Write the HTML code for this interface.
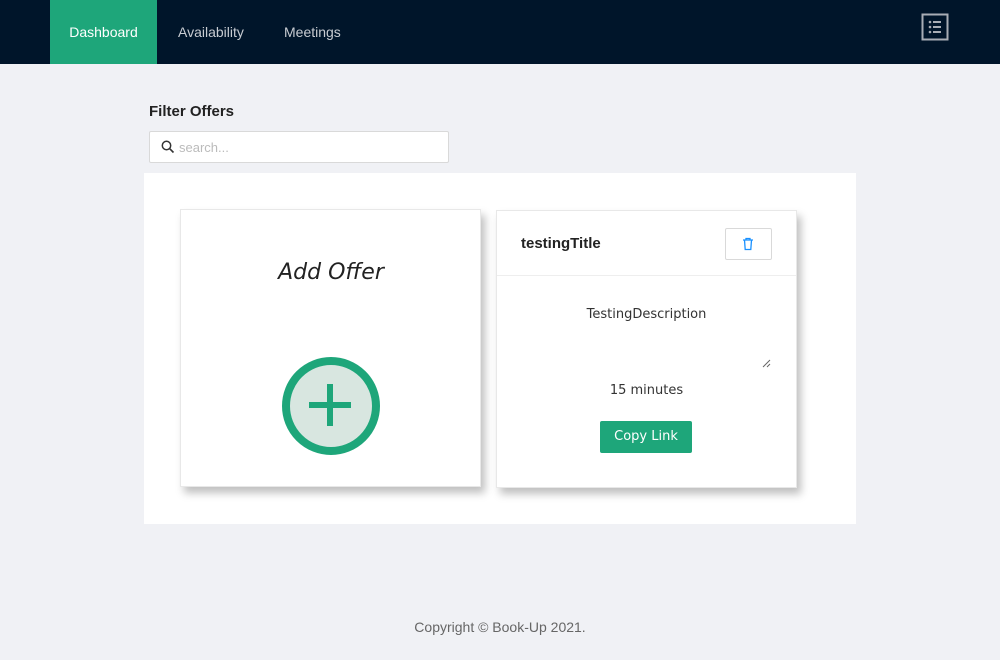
<!DOCTYPE html>
<html><head><meta charset="utf-8"><style>
*{box-sizing:border-box;margin:0;padding:0}
body{width:1000px;height:660px;background:#f0f1f5;font-family:"Liberation Sans",sans-serif;position:relative;overflow:hidden}
.nav{position:absolute;left:0;top:0;width:1000px;height:64px;background:#00152a}
.nav a{position:absolute;top:0;height:64px;line-height:64px;color:#c8ccd2;font-size:14px;text-decoration:none}
.active{background:#1ea67a;color:#fff!important;text-align:center}
.ab{position:absolute}
.card{position:absolute;background:#fff;border:1px solid #e8e8e8;box-shadow:4px 6px 8px rgba(0,0,0,.25)}
</style></head><body>
<div class="nav">
<a class="active" style="left:50px;width:107px">Dashboard</a>
<a style="left:178px">Availability</a>
<a style="left:284px">Meetings</a>
<svg class="ab" style="left:921px;top:13px" width="28" height="28" viewBox="0 0 28 28"><rect x="1.5" y="1.5" width="25" height="25" fill="none" stroke="#a8adb5" stroke-width="2"/><g fill="#a8adb5"><circle cx="9" cy="9" r="1.3"/><circle cx="9" cy="14" r="1.3"/><circle cx="9" cy="19" r="1.3"/><rect x="12" y="8" width="8" height="2"/><rect x="12" y="13" width="8" height="2"/><rect x="12" y="18" width="8" height="2"/></g></svg>
</div>
<div class="ab" style="left:149px;top:103px;font-size:15px;color:#222;font-weight:bold">Filter Offers</div>
<div class="ab" style="left:149px;top:131px;width:300px;height:32px;background:#fff;border:1px solid #d9d9d9;border-radius:2px">
<svg class="ab" style="left:11px;top:8px" width="14" height="14" viewBox="0 0 14 14"><circle cx="5.5" cy="5.5" r="4.2" fill="none" stroke="#333" stroke-width="1.5"/><path d="M8.6 8.6L12.5 12.5" stroke="#333" stroke-width="1.6"/></svg>
<span class="ab" style="left:29px;top:8px;font-size:13px;color:#bbb">search...</span></div>
<div class="ab" style="left:144px;top:173px;width:712px;height:351px;background:#fff"></div>
<div class="card" style="left:180px;top:209px;width:301px;height:278px">
<div class="ab" style="left:0;width:300px;top:50px;text-align:center;font-size:22px;font-style:italic;color:#222;font-family:'DejaVu Sans',sans-serif;font-weight:300">Add Offer</div>
<svg class="ab" style="left:100px;top:146px" width="100" height="100" viewBox="0 0 100 100"><circle cx="50" cy="50" r="45" fill="#d8e6e0" stroke="#1ea67a" stroke-width="8"/><rect x="28" y="46" width="42" height="6" fill="#1ea67a"/><rect x="46" y="28" width="6" height="42" fill="#1ea67a"/></svg>
</div>
<div class="card" style="left:496px;top:210px;width:301px;height:278px">
<div class="ab" style="left:24px;top:24px;font-size:15px;color:#222;font-weight:bold">testingTitle</div>
<div class="ab" style="left:228px;top:17px;width:47px;height:32px;border:1px solid #d9d9d9;border-radius:2px">
<svg class="ab" style="left:15px;top:8px" width="14" height="14" viewBox="0 0 14 14" fill="none" stroke="#1890ff" stroke-width="1.3"><path d="M2 3h10M5 3V1.5h4V3M3.5 3l.7 9.5h5.6l.7-9.5"/></svg></div>
<div class="ab" style="left:0;top:64px;width:299px;border-top:1px solid #eee"></div>
<div class="ab" style="left:0;width:299px;top:96px;text-align:center;font-size:13px;color:#333;font-family:'DejaVu Sans',sans-serif">TestingDescription</div>
<svg class="ab" style="left:265px;top:148px" width="9" height="9"><path d="M1 8L8 1M5 8L8 5" stroke="#666"/></svg>
<div class="ab" style="left:0;width:299px;top:172px;text-align:center;font-size:13px;color:#333;font-family:'DejaVu Sans',sans-serif">15 minutes</div>
<div class="ab" style="left:103px;top:210px;width:92px;height:32px;background:#1ea67a;border-radius:2px;color:#fff;font-size:13px;line-height:32px;text-align:center;font-family:'DejaVu Sans',sans-serif">Copy Link</div>
</div>
<div class="ab" style="left:0;width:1000px;top:619px;text-align:center;font-size:14px;color:#666">Copyright © Book-Up 2021.</div>
</body></html>
